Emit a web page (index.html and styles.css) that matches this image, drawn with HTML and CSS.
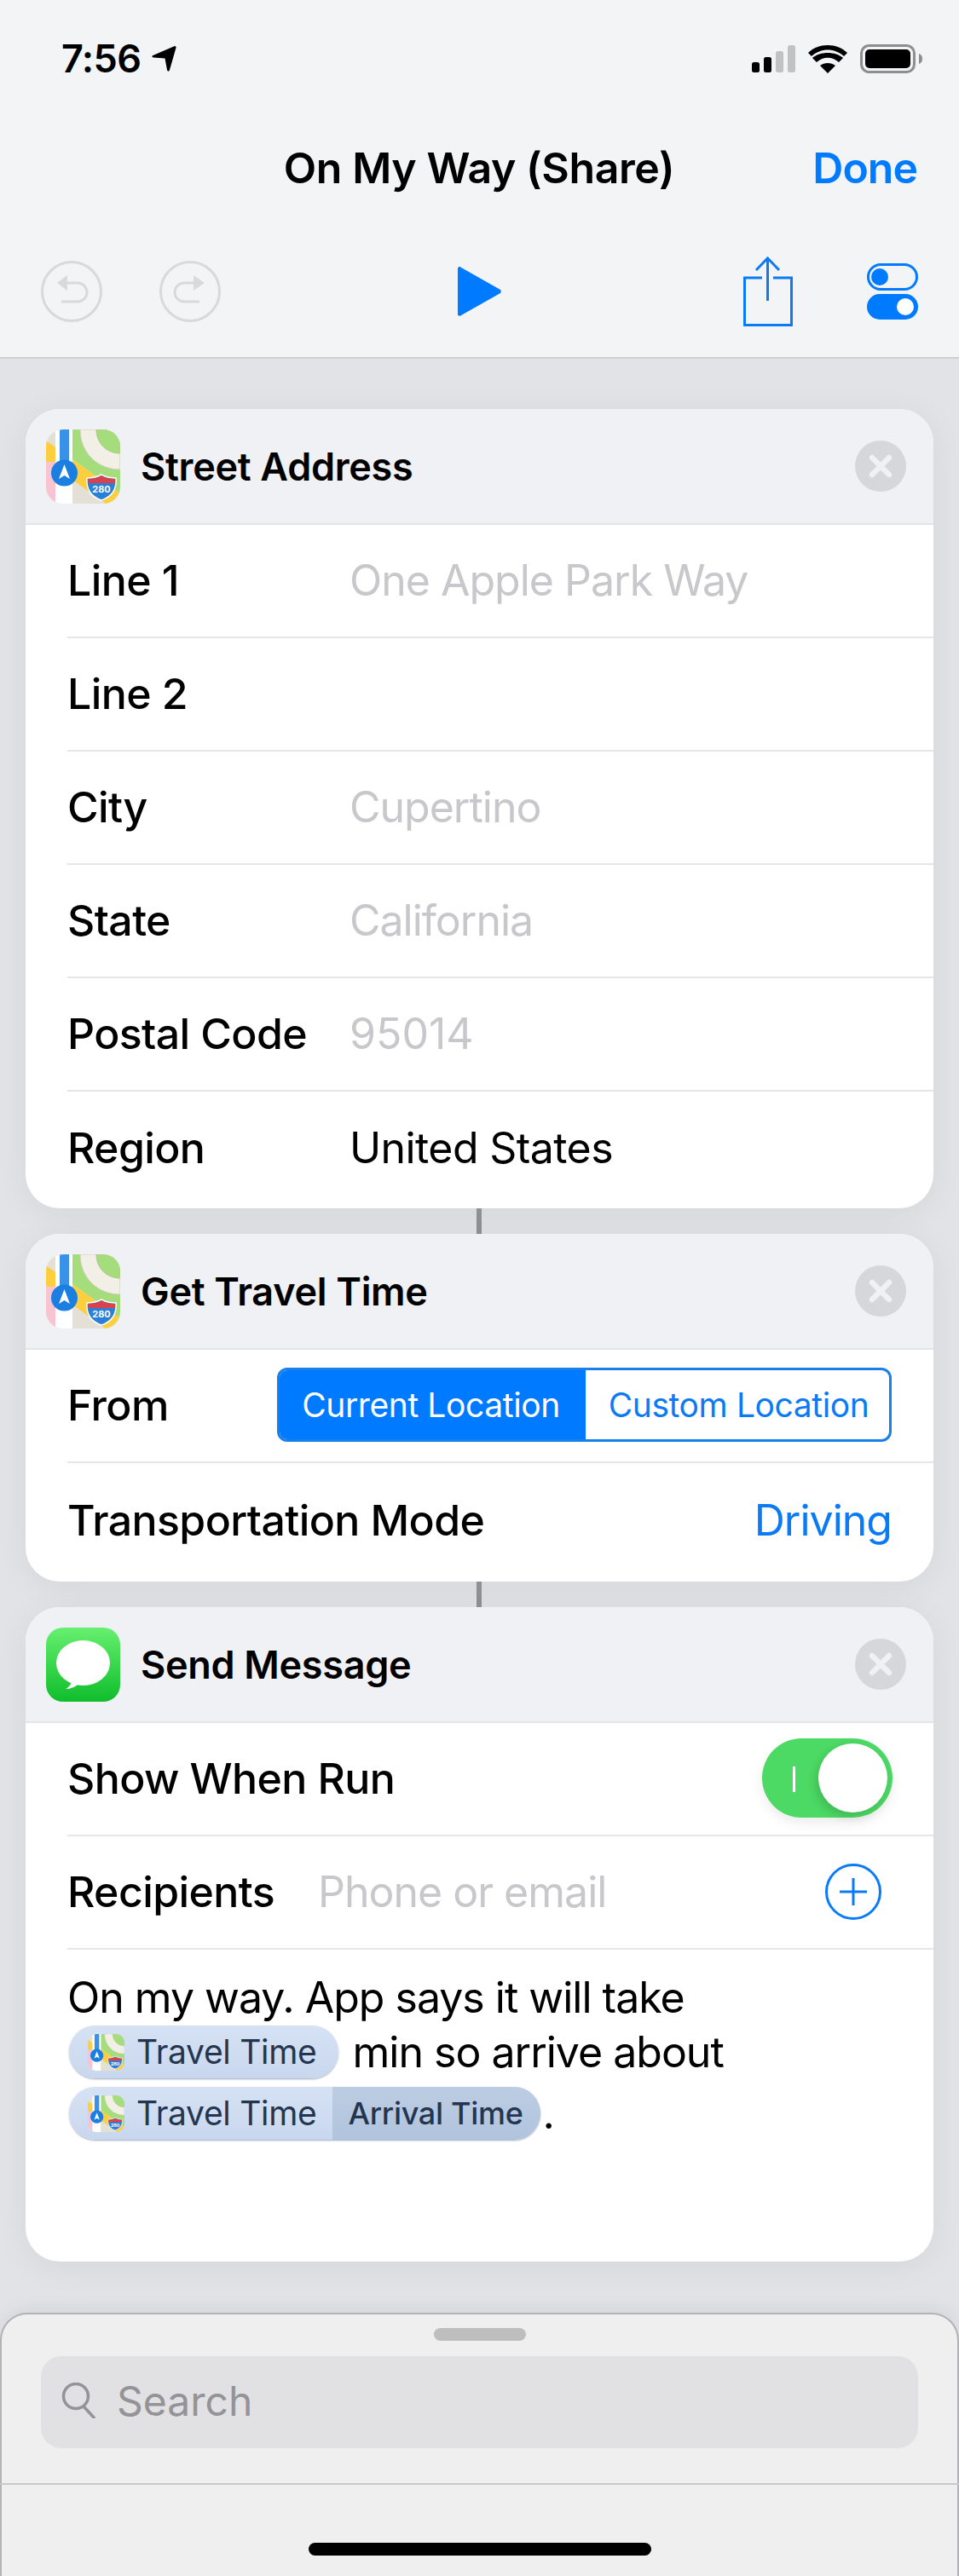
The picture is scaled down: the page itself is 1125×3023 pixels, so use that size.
FILE: index.html
```html
<!DOCTYPE html>
<html lang="en">
<head>
  <meta charset="UTF-8">
  <title>On My Way (Share)</title>
  <link rel="stylesheet" href="styles.css">
</head>
<body>
  <svg class="defs" width="0" height="0">
    <defs>
      <clipPath id="mapsClip"><rect width="87" height="87" rx="20"/></clipPath>
      <symbol id="maps" viewBox="0 0 87 87">
        <g clip-path="url(#mapsClip)">
          <rect width="87" height="87" fill="#e4e0d6"/>
          <path d="M31 0H87V87H31Z" fill="#a5dc7c"/>
          <path d="M40 0H87V47C60 47 40 27 40 0Z" fill="#f2efe6" stroke="#cfcdb8" stroke-width="1"/>
          <path d="M59 0H87V28C71 28 59 16 59 0Z" fill="#a5dc7c" stroke="#b5c48a" stroke-width="1"/>
          <path d="M31 35L87 75V87H31Z" fill="#e4e0d6"/>
          <path d="M0 13L87 75V87H70L0 37Z" fill="#fdcf3f"/>
          <rect y="38" width="12" height="49" fill="#f9c4d2"/>
          <rect x="11" width="20" height="87" fill="#fff"/>
          <rect x="16" width="11" height="50" fill="#3a91e8"/>
          <circle cx="21.500" cy="51" r="15.500" fill="#1a7fe0"/>
          <path d="M21.500 41L28 58L21.500 54L15 58Z" fill="#fff"/>
          <path d="M48 57C54 57 60 56 65 53C70 56 76 57 82 57C83 70 77 79 65 83C53 79 47 70 48 57Z" fill="#2a80d6" stroke="#fff" stroke-width="1.500"/>
          <path d="M49 58C55 58 60 57 65 54C70 57 76 58 81 58L81 63H49Z" fill="#d9414c"/>
          <text x="65" y="74" class="shield">280</text>
        </g>
      </symbol>
      <symbol id="close" viewBox="0 0 60 60">
        <circle cx="30" cy="30" r="30" fill="#d5d7db"/>
        <path d="M20 20L40 40M40 20L20 40" stroke="#f0f1f5" stroke-width="6.500" stroke-linecap="round"/>
      </symbol>
    </defs>
  </svg>

  <div class="phone">
    <header class="top">
      <div class="status">
        <div class="clock">
          <span>7:56</span>
          <svg width="29" height="30" viewBox="0 0 29 30"><path d="M27 0C28 0 29 1 28.500 2L21 28C20.500 30 18.500 30 18 28L15.500 14.500L2 13.500C0 13 0 11.500 1.500 11Z" fill="#000"/></svg>
        </div>
        <div class="status-icons">
          <svg width="51" height="32" viewBox="0 0 51 32">
            <rect x="0" y="20" width="9" height="12" rx="2.500" fill="#000"/>
            <rect x="14" y="14" width="9" height="18" rx="2.500" fill="#000"/>
            <rect x="28" y="7" width="9" height="25" rx="2.500" fill="#c2c2c2"/>
            <rect x="42" y="0" width="9" height="32" rx="2.500" fill="#c2c2c2"/>
          </svg>
          <svg width="46" height="33" viewBox="0 0 46 33">
            <path d="M23 33L14 24C19 20 27 20 32 24Z" fill="#000"/>
            <path d="M10 20L5 15C14 7 32 7 41 15L36 20C28 13 18 13 10 20Z" fill="#000"/>
            <path d="M4 13L0 9C12 -3 34 -3 46 9L42 13C31 3 15 3 4 13Z" fill="#000"/>
          </svg>
          <svg width="73" height="34" viewBox="0 0 73 34">
            <rect x="1.500" y="1.500" width="62" height="31" rx="9" fill="none" stroke="#8e8e8e" stroke-width="3"/>
            <rect x="6" y="6" width="53" height="22" rx="5" fill="#000"/>
            <path d="M69 11C72 12 73 14 73 17C73 20 72 22 69 23Z" fill="#8e8e8e"/>
          </svg>
        </div>
      </div>
      <div class="navbar">
        <h1 class="title">On My Way (Share)</h1>
        <span class="done">Done</span>
      </div>
      <div class="toolbar">
        <div class="tool-group">
          <svg width="72" height="72" viewBox="0 0 72 72" fill="none" stroke="#d9d9da" stroke-width="3">
            <circle cx="36" cy="36" r="34.500"/>
            <path d="M31 26H43A11 11 0 0 1 43 48H24"/>
            <path d="M31 17L19 26L31 35Z" fill="#d9d9da" stroke="none"/>
          </svg>
          <svg width="72" height="72" viewBox="0 0 72 72" fill="none" stroke="#d9d9da" stroke-width="3">
            <circle cx="36" cy="36" r="34.500"/>
            <path d="M40 26H29A11 11 0 0 0 29 48H47"/>
            <path d="M40 17L53 26L40 35Z" fill="#d9d9da" stroke="none"/>
          </svg>
        </div>
        <svg class="play" width="51" height="58" viewBox="0 0 51 58"><path d="M2 0C3 0 3.500 0.500 4 1L50 27C51 28 51 30 50 31L4 57C3 58 0 58 0 56V2C0 1 1 0 2 0Z" fill="#007aff"/></svg>
        <div class="tool-group right">
          <svg width="58" height="82" viewBox="0 0 58 82" fill="none" stroke="#0a7bf5" stroke-width="3">
            <path d="M22 25H1.500V80.500H56.500V25H35"/>
            <path d="M28.500 2V52"/>
            <path d="M15 16L28.500 2L42 16"/>
          </svg>
          <svg class="toggles" width="60" height="66" viewBox="0 0 60 66">
            <rect x="1.500" y="1.500" width="57" height="29" rx="14.500" fill="none" stroke="#007aff" stroke-width="3"/>
            <circle cx="15" cy="16" r="10" fill="#007aff"/>
            <rect y="36" width="60" height="30" rx="15" fill="#007aff"/>
            <circle cx="45" cy="51" r="10" fill="#fff"/>
          </svg>
        </div>
      </div>
    </header>

    <main class="workflow">
      <section class="card first-card">
        <div class="card-head">
          <svg class="app-icon" width="87" height="87"><use href="#maps"/></svg>
          <h2>Street Address</h2>
          <svg class="close" width="60" height="60"><use href="#close"/></svg>
        </div>
        <div class="row"><span class="label">Line 1</span><span class="value hint">One Apple Park Way</span></div>
        <div class="row"><span class="label">Line 2</span></div>
        <div class="row"><span class="label">City</span><span class="value hint">Cupertino</span></div>
        <div class="row"><span class="label">State</span><span class="value hint">California</span></div>
        <div class="row"><span class="label">Postal Code</span><span class="value hint digits">95014</span></div>
        <div class="row"><span class="label">Region</span><span class="value">United States</span></div>
      </section>
      <div class="link"></div>

      <section class="card">
        <div class="card-head">
          <svg class="app-icon" width="87" height="87"><use href="#maps"/></svg>
          <h2>Get Travel Time</h2>
          <svg class="close" width="60" height="60"><use href="#close"/></svg>
        </div>
        <div class="row">
          <span class="label">From</span>
          <div class="segments">
            <span class="seg on">Current Location</span>
            <span class="seg">Custom Location</span>
          </div>
        </div>
        <div class="row tall">
          <span class="label">Transportation Mode</span>
          <span class="driving">Driving</span>
        </div>
      </section>
      <div class="link"></div>

      <section class="card">
        <div class="card-head">
          <svg class="app-icon" width="87" height="87" viewBox="0 0 87 87">
            <defs>
              <linearGradient id="msgGreen" x1="0" y1="0" x2="0" y2="1">
                <stop offset="0" stop-color="#66f06f"/>
                <stop offset="1" stop-color="#0fbd2c"/>
              </linearGradient>
            </defs>
            <rect width="87" height="87" rx="20" fill="url(#msgGreen)"/>
            <ellipse cx="43.500" cy="41.500" rx="31.500" ry="26.500" fill="#fff"/>
            <path d="M30 62C30 66 27 70 23 72C28 72 34 70 38 66Z" fill="#fff"/>
          </svg>
          <h2>Send Message</h2>
          <svg class="close" width="60" height="60"><use href="#close"/></svg>
        </div>
        <div class="row">
          <span class="label">Show When Run</span>
          <div class="switch"><span class="switch-bar"></span><span class="knob"></span></div>
        </div>
        <div class="row">
          <span class="label">Recipients</span>
          <span class="recipient hint">Phone or email</span>
          <svg class="add" width="66" height="66" viewBox="0 0 66 66" fill="none" stroke="#0a7bf5" stroke-width="3">
            <circle cx="33" cy="33" r="31.500"/>
            <path d="M17 33H49M33 17V49"/>
          </svg>
        </div>
        <div class="message">
          <div class="msg-line first">On my way. App says it will take</div>
          <div class="msg-line">
            <span class="pill">
              <span class="pill-part solo"><svg width="43" height="43"><use href="#maps"/></svg>Travel Time</span>
            </span>
            <span class="after-pill">min so arrive about</span>
          </div>
          <div class="msg-line">
            <span class="pill">
              <span class="pill-part"><svg width="43" height="43"><use href="#maps"/></svg>Travel Time</span>
              <span class="pill-part dark">Arrival Time</span>
            </span>
            <span class="dot">.</span>
          </div>
        </div>
      </section>
    </main>

    <footer class="drawer">
      <div class="handle"></div>
      <div class="search">
        <svg width="41" height="42" viewBox="0 0 41 42" fill="none" stroke="#939398" stroke-width="3.500">
          <circle cx="17" cy="16" r="14.500"/>
          <path d="M27 29L38 41" stroke-linecap="round"/>
        </svg>
        <span>Search</span>
      </div>
      <div class="drawer-line"></div>
      <div class="home-bar"></div>
    </footer>
  </div>
</body>
</html>
```

FILE: styles.css
```css
*{
  margin: 0;
  padding: 0;
  box-sizing: border-box;
}

html, body{
  width: 1125px;
  height: 3023px;
  overflow: hidden;
}

body{
  font-family: Inter, "Noto Sans", sans-serif;
  color: #000;
  background: #e1e3e7;
}

.defs{
  position: absolute;
}

.shield{
  font-size: 11px;
  font-weight: 700;
  fill: #fff;
  text-anchor: middle;
}

.phone{
  width: 1125px;
  height: 3023px;
  display: flex;
  flex-direction: column;
}

/* top bars */
.top{
  height: 421px;
  flex: none;
  background: #f3f4f6;
  border-bottom: 2px solid #cfd0d3;
}

.status{
  height: 152px;
  padding: 46px 43px 0 72px;
  display: flex;
  justify-content: space-between;
  align-items: flex-start;
}

.clock{
  display: flex;
  align-items: center;
  gap: 13px;
  font-size: 45px;
  font-weight: 600;
  line-height: 45px;
  letter-spacing: -0.6px;
}

.status-icons{
  display: flex;
  align-items: center;
  gap: 15px;
  margin-top: 6px;
}

.navbar{
  height: 90px;
  position: relative;
  display: flex;
  justify-content: center;
  align-items: center;
}

.title{
  font-size: 50px;
  font-weight: 600;
  letter-spacing: -0.4px;
  margin-left: -1px;
}

.done{
  position: absolute;
  right: 49px;
  top: 15px;
  font-size: 50px;
  font-weight: 600;
  letter-spacing: -1px;
  color: #007aff;
}

.toolbar{
  height: 120px;
  padding: 0 48px;
  margin-top: 40px;
  display: flex;
  justify-content: space-between;
  align-items: center;
}

.tool-group{
  width: 212px;
  display: flex;
  gap: 67px;
}

.tool-group.right{
  gap: 87px;
  justify-content: flex-end;
  align-items: center;
}

/* action cards */
.workflow{
  height: 2293px;
  flex: none;
  padding: 59px 30px 0;
  overflow: hidden;
}

.card{
  background: #fff;
  border-radius: 40px;
  box-shadow: 0 6px 40px rgba(0,0,0,0.06);
  overflow: hidden;
}

.first-card{
  padding-bottom: 4px;
}

.card-head{
  height: 136px;
  padding: 0 32px 0 24px;
  display: flex;
  align-items: center;
  background: #f0f1f5;
  border-bottom: 2px solid #e4e4e7;
}

.card-head h2{
  flex: 1;
  margin-left: 24px;
  font-size: 45px;
  font-weight: 600;
  letter-spacing: -0.3px;
}

.row{
  height: 133px;
  margin-left: 49px;
  padding-right: 49px;
  padding-bottom: 2px;
  display: flex;
  align-items: center;
  border-bottom: 2px solid #e6e6e8;
  font-size: 50px;
  letter-spacing: -0.6px;
}

.row:last-child, .row.tall{
  border-bottom: 0;
}

.row.tall{
  height: 139px;
  padding-bottom: 6px;
}

.label{
  font-weight: 500;
}

.value{
  position: absolute;
  left: 410px;
}

.hint{
  color: #c7c7cc;
  letter-spacing: -1px;
}

.hint.digits{
  letter-spacing: 0;
}

.link{
  width: 6px;
  height: 30px;
  margin-left: 529px;
  background: #8f9094;
}

.segments{
  margin-left: auto;
  width: 721px;
  height: 87px;
  display: flex;
  border: 3px solid #1a7fe8;
  border-radius: 12px;
  overflow: hidden;
  font-size: 39px;
  letter-spacing: -0.4px;
}

.seg{
  display: flex;
  align-items: center;
  justify-content: center;
  flex: 1;
  padding-left: 3px;
  color: #0a7bf5;
}

.seg.on{
  flex: none;
  width: 359px;
  padding: 0 4px 0 0;
  background: #007aff;
  color: #fff;
}

.driving{
  margin-left: auto;
  letter-spacing: -1px;
  color: #0a7bf5;
}

.switch{
  position: relative;
  margin-left: auto;
  margin-right: -1px;
  width: 153px;
  height: 93px;
  border-radius: 47px;
  background: #4cd964;
  box-shadow: 0 6px 14px rgba(0,0,0,0.08);
}

.switch-bar{
  position: absolute;
  left: 36px;
  top: 33px;
  width: 3px;
  height: 30px;
  background: #fff;
}

.knob{
  position: absolute;
  left: 66px;
  top: 6px;
  width: 81px;
  height: 81px;
  border-radius: 50%;
  background: #fff;
  box-shadow: -3px 5px 12px rgba(0,0,0,0.15);
}

.recipient{
  margin-left: 51px;
  flex: 1;
}

.add{
  margin-right: 12px;
}

.message{
  height: 366px;
  padding: 27px 0 0 49px;
  font-size: 50px;
  letter-spacing: -1px;
}

.msg-line{
  display: flex;
  align-items: center;
  line-height: 62px;
  margin-bottom: 10px;
}

.msg-line.first{
  height: 58px;
  margin-bottom: 4px;
}

.pill{
  display: inline-flex;
  height: 62px;
  margin-left: 2px;
  border-radius: 31px;
  overflow: hidden;
  background: linear-gradient(#d6e2f4, #c9d7ee);
  box-shadow: 0 1px 2px rgba(60,80,120,0.5);
  font-size: 39px;
  letter-spacing: -0.3px;
  color: #24364f;
}

.pill-part{
  display: flex;
  align-items: center;
  gap: 14px;
  padding: 0 18px 0 22px;
}

.pill-part.solo{
  padding-right: 25px;
}

.pill-part.dark{
  padding: 0 20px 0 19px;
  background: linear-gradient(#bccde3, #b1c4dd);
  color: #24364f;
  font-weight: 500;
  font-size: 36px;
  letter-spacing: -0.3px;
}

.after-pill{
  margin-left: 17px;
}

.dot{
  margin-left: 3px;
  align-self: flex-end;
}

/* bottom drawer */
.drawer{
  flex: 1;
  background: #efefef;
  border: 2px solid #b3b3b6;
  border-bottom: 0;
  border-radius: 32px 32px 0 0;
  box-shadow: 0 -6px 20px rgba(0,0,0,0.05);
  position: relative;
}

.handle{
  width: 108px;
  height: 15px;
  margin: 16px auto 0;
  border-radius: 8px;
  background: #bebebf;
}

.search{
  height: 108px;
  margin: 18px 46px 0;
  padding: 0 0 4px 24px;
  display: flex;
  align-items: center;
  gap: 24px;
  border-radius: 24px;
  background: #e1e1e3;
  font-size: 48px;
  color: #939398;
}

.drawer-line{
  height: 2px;
  margin: 41px -2px 0;
  background: #c9c9cb;
}

.home-bar{
  width: 402px;
  height: 15px;
  margin: 68px auto 0;
  border-radius: 8px;
  background: #000;
}
```
